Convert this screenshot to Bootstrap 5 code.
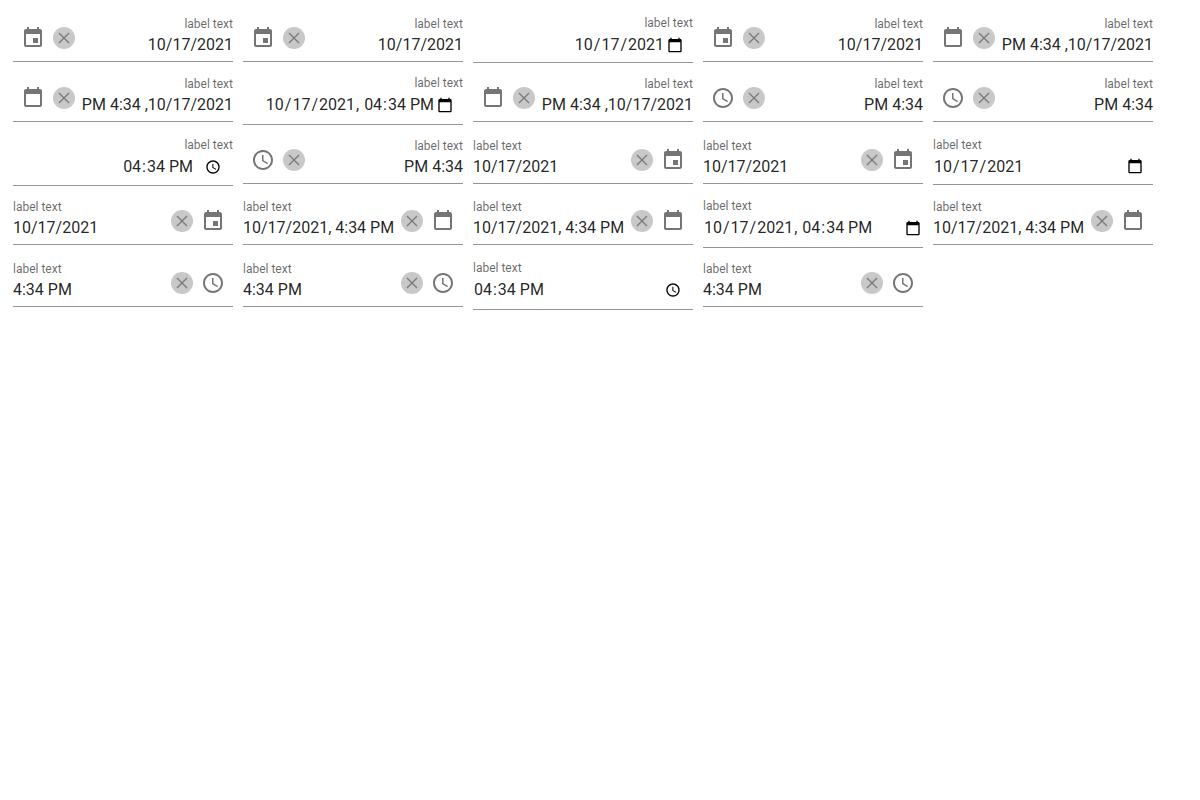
<!DOCTYPE html>
<html lang="en">
<head>
<meta charset="utf-8">
<meta name="viewport" content="width=device-width, initial-scale=1">
<title>Date and time fields</title>
<link href="https://cdn.jsdelivr.net/npm/bootstrap@5.3.0/dist/css/bootstrap.min.css" rel="stylesheet">
<style>
body{font-family:Roboto,"Liberation Sans",sans-serif;color:rgba(0,0,0,.87);background:#fff}
.fields{display:grid;grid-template-columns:repeat(5,220px);grid-template-rows:60px 62px 61px 62px 62px;column-gap:10px;padding:17px 0 0 13px;align-items:start}
.field{height:45px;border-bottom:1px solid #949494}
.caption{font-size:12px;line-height:14px;color:rgba(0,0,0,.6);margin-bottom:4px}
.value{font-size:16px;line-height:19px;white-space:nowrap}
.tools{height:24px;margin-top:9px;gap:8px;padding:0 8px}
.tools svg{width:24px;height:24px;fill:#757575}
.clear{width:22px;height:22px;border-radius:50%;background:#c8c8c8}
.clear svg{width:18px;height:18px;fill:none;stroke:#7a7a7a;stroke-width:1.8}
.rtl{flex-direction:row-reverse}
.rtl .texts{text-align:right}
.rtl .tools{flex-direction:row-reverse}
.native{margin-top:-1px;height:47px}
.native .caption{margin-bottom:5px}
.native.mid{height:48px}
.native.tall{height:49px}
.native .value i{font-style:normal;padding:0 1px}
.native .value .meridiem{margin-left:-2px}
.native .picker{width:16px;height:16px;fill:#000;margin:2px 10px 0 0}
.native.plain .picker{margin-top:1px}
.native.wide .picker{margin-right:2px}
.native.clock .picker{margin-right:12px}
.native.rtl .value{justify-content:flex-end!important;gap:2px}
.native.rtl.clock .value{gap:11px}
</style>
</head>
<body>
<svg width="0" height="0" class="position-absolute" aria-hidden="true">
<symbol id="event" viewBox="0 0 24 24"><path d="M17 12h-5v5h5v-5zM16 1v2H8V1H6v2H5c-1.11 0-1.99.9-1.99 2L3 19c0 1.1.89 2 2 2h14c1.1 0 2-.9 2-2V5c0-1.1-.9-2-2-2h-1V1h-2zm3 18H5V8h14v11z"/></symbol>
<symbol id="calendar" viewBox="0 0 24 24"><path d="M16 1v2H8V1H6v2H5c-1.11 0-1.99.9-1.99 2L3 19c0 1.1.89 2 2 2h14c1.1 0 2-.9 2-2V5c0-1.1-.9-2-2-2h-1V1h-2zm3 18H5V8h14v11z"/></symbol>
<symbol id="clock" viewBox="0 0 24 24"><path d="M11.99 2C6.47 2 2 6.48 2 12s4.47 10 9.99 10C17.52 22 22 17.52 22 12S17.52 2 11.99 2zM12 20c-4.42 0-8-3.58-8-8s3.58-8 8-8 8 3.58 8 8-3.58 8-8 8zm.5-13H11v6l5.25 3.15.75-1.23-4.5-2.67z"/></symbol>
<symbol id="close" viewBox="0 0 24 24"><path d="M5.3 5.3l13.4 13.4M18.7 5.3l-13.4 13.4"/></symbol>
<symbol id="picker" viewBox="0 0 24 24"><path d="M20 3h-1V1h-2v2H7V1H5v2H4c-1.1 0-2 .9-2 2v16c0 1.1.9 2 2 2h16c1.1 0 2-.9 2-2V5c0-1.1-.9-2-2-2zm0 18H4V8h16v13z"/></symbol>
</svg>
<main class="fields">
<!-- right-to-left fields -->
<div class="field rtl d-flex justify-content-between"><div class="texts"><div class="caption">label text</div><div class="value">10/17/2021</div></div><div class="tools d-flex align-items-center"><span class="clear d-flex align-items-center justify-content-center"><svg><use href="#close"/></svg></span><svg><use href="#event"/></svg></div></div>
<div class="field rtl d-flex justify-content-between"><div class="texts"><div class="caption">label text</div><div class="value">10/17/2021</div></div><div class="tools d-flex align-items-center"><span class="clear d-flex align-items-center justify-content-center"><svg><use href="#close"/></svg></span><svg><use href="#event"/></svg></div></div>
<div class="field native rtl"><div class="caption text-end">label text</div><div class="value d-flex justify-content-between"><span><i>10</i>/<i>17</i>/<i>2021</i></span><svg class="picker"><use href="#picker"/></svg></div></div>
<div class="field rtl d-flex justify-content-between"><div class="texts"><div class="caption">label text</div><div class="value">10/17/2021</div></div><div class="tools d-flex align-items-center"><span class="clear d-flex align-items-center justify-content-center"><svg><use href="#close"/></svg></span><svg><use href="#event"/></svg></div></div>
<div class="field rtl d-flex justify-content-between"><div class="texts"><div class="caption">label text</div><div class="value">PM 4:34 ,10/17/2021</div></div><div class="tools d-flex align-items-center pe-0"><span class="clear d-flex align-items-center justify-content-center"><svg><use href="#close"/></svg></span><svg><use href="#calendar"/></svg></div></div>

<div class="field rtl d-flex justify-content-between"><div class="texts"><div class="caption">label text</div><div class="value">PM 4:34 ,10/17/2021</div></div><div class="tools d-flex align-items-center pe-0"><span class="clear d-flex align-items-center justify-content-center"><svg><use href="#close"/></svg></span><svg><use href="#calendar"/></svg></div></div>
<div class="field native tall rtl"><div class="caption text-end">label text</div><div class="value d-flex justify-content-between"><span><i>10</i>/<i>17</i>/<i>2021</i>, <i>04</i>:<i>34</i> <i class="meridiem">PM</i></span><svg class="picker"><use href="#picker"/></svg></div></div>
<div class="field rtl d-flex justify-content-between"><div class="texts"><div class="caption">label text</div><div class="value">PM 4:34 ,10/17/2021</div></div><div class="tools d-flex align-items-center pe-0"><span class="clear d-flex align-items-center justify-content-center"><svg><use href="#close"/></svg></span><svg><use href="#calendar"/></svg></div></div>
<div class="field rtl d-flex justify-content-between"><div class="texts"><div class="caption">label text</div><div class="value">PM 4:34</div></div><div class="tools d-flex align-items-center"><span class="clear d-flex align-items-center justify-content-center"><svg><use href="#close"/></svg></span><svg><use href="#clock"/></svg></div></div>
<div class="field rtl d-flex justify-content-between"><div class="texts"><div class="caption">label text</div><div class="value">PM 4:34</div></div><div class="tools d-flex align-items-center"><span class="clear d-flex align-items-center justify-content-center"><svg><use href="#close"/></svg></span><svg><use href="#clock"/></svg></div></div>

<div class="field native mid clock rtl"><div class="caption text-end">label text</div><div class="value d-flex justify-content-between"><span><i>04</i>:<i>34</i> <i class="meridiem">PM</i></span><svg class="picker"><use href="#clock"/></svg></div></div>
<div class="field rtl d-flex justify-content-between"><div class="texts"><div class="caption">label text</div><div class="value">PM 4:34</div></div><div class="tools d-flex align-items-center"><span class="clear d-flex align-items-center justify-content-center"><svg><use href="#close"/></svg></span><svg><use href="#clock"/></svg></div></div>
<!-- left-to-right fields -->
<div class="field d-flex justify-content-between"><div class="texts"><div class="caption">label text</div><div class="value">10/17/2021</div></div><div class="tools d-flex align-items-center"><span class="clear d-flex align-items-center justify-content-center"><svg><use href="#close"/></svg></span><svg><use href="#event"/></svg></div></div>
<div class="field d-flex justify-content-between"><div class="texts"><div class="caption">label text</div><div class="value">10/17/2021</div></div><div class="tools d-flex align-items-center"><span class="clear d-flex align-items-center justify-content-center"><svg><use href="#close"/></svg></span><svg><use href="#event"/></svg></div></div>
<div class="field native plain"><div class="caption">label text</div><div class="value d-flex justify-content-between"><span><i>10</i>/<i>17</i>/<i>2021</i></span><svg class="picker"><use href="#picker"/></svg></div></div>

<div class="field d-flex justify-content-between"><div class="texts"><div class="caption">label text</div><div class="value">10/17/2021</div></div><div class="tools d-flex align-items-center"><span class="clear d-flex align-items-center justify-content-center"><svg><use href="#close"/></svg></span><svg><use href="#event"/></svg></div></div>
<div class="field d-flex justify-content-between"><div class="texts"><div class="caption">label text</div><div class="value">10/17/2021, 4:34 PM</div></div><div class="tools d-flex align-items-center ps-0"><span class="clear d-flex align-items-center justify-content-center"><svg><use href="#close"/></svg></span><svg><use href="#calendar"/></svg></div></div>
<div class="field d-flex justify-content-between"><div class="texts"><div class="caption">label text</div><div class="value">10/17/2021, 4:34 PM</div></div><div class="tools d-flex align-items-center ps-0"><span class="clear d-flex align-items-center justify-content-center"><svg><use href="#close"/></svg></span><svg><use href="#calendar"/></svg></div></div>
<div class="field native tall wide"><div class="caption">label text</div><div class="value d-flex justify-content-between"><span><i>10</i>/<i>17</i>/<i>2021</i>, <i>04</i>:<i>34</i> <i class="meridiem">PM</i></span><svg class="picker"><use href="#picker"/></svg></div></div>
<div class="field d-flex justify-content-between"><div class="texts"><div class="caption">label text</div><div class="value">10/17/2021, 4:34 PM</div></div><div class="tools d-flex align-items-center ps-0"><span class="clear d-flex align-items-center justify-content-center"><svg><use href="#close"/></svg></span><svg><use href="#calendar"/></svg></div></div>

<div class="field d-flex justify-content-between"><div class="texts"><div class="caption">label text</div><div class="value">4:34 PM</div></div><div class="tools d-flex align-items-center"><span class="clear d-flex align-items-center justify-content-center"><svg><use href="#close"/></svg></span><svg><use href="#clock"/></svg></div></div>
<div class="field d-flex justify-content-between"><div class="texts"><div class="caption">label text</div><div class="value">4:34 PM</div></div><div class="tools d-flex align-items-center"><span class="clear d-flex align-items-center justify-content-center"><svg><use href="#close"/></svg></span><svg><use href="#clock"/></svg></div></div>
<div class="field native tall clock"><div class="caption">label text</div><div class="value d-flex justify-content-between"><span><i>04</i>:<i>34</i> <i class="meridiem">PM</i></span><svg class="picker"><use href="#clock"/></svg></div></div>
<div class="field d-flex justify-content-between"><div class="texts"><div class="caption">label text</div><div class="value">4:34 PM</div></div><div class="tools d-flex align-items-center"><span class="clear d-flex align-items-center justify-content-center"><svg><use href="#close"/></svg></span><svg><use href="#clock"/></svg></div></div>
</main>
<script src="https://cdn.jsdelivr.net/npm/bootstrap@5.3.0/dist/js/bootstrap.bundle.min.js"></script>
</body>
</html>
